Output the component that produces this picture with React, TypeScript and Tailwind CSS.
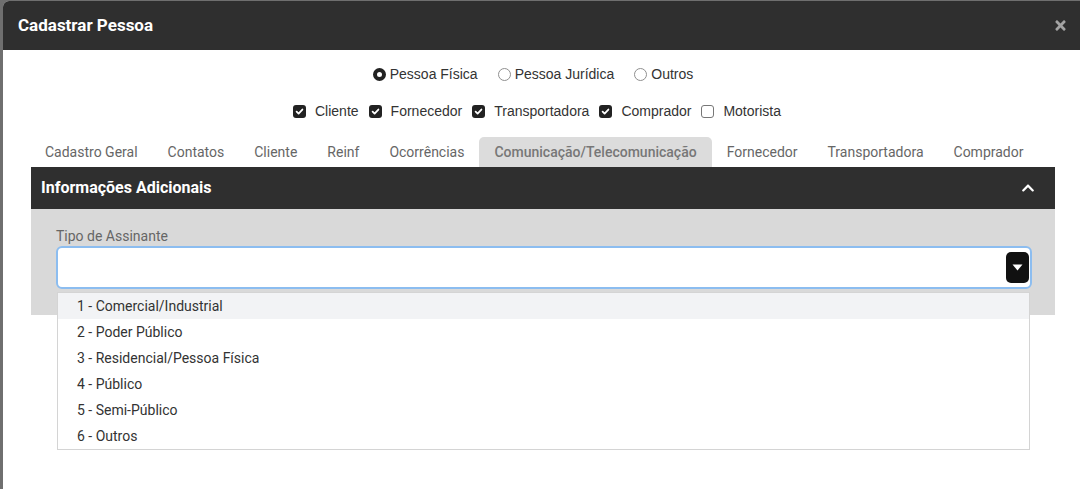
import React from 'react';
import { FaTimes, FaChevronUp } from 'react-icons/fa';

const tabs = [
  'Cadastro Geral',
  'Contatos',
  'Cliente',
  'Reinf',
  'Ocorrências',
  'Comunicação/Telecomunicação',
  'Fornecedor',
  'Transportadora',
  'Comprador',
];

const options = [
  '1 - Comercial/Industrial',
  '2 - Poder Público',
  '3 - Residencial/Pessoa Física',
  '4 - Público',
  '5 - Semi-Público',
  '6 - Outros',
];

const Radio = ({ checked, label }: { checked?: boolean; label: string }) => (
  <label className="flex items-center gap-[4px]">
    {checked ? (
      <span className="w-[13px] h-[13px] rounded-full border-[4px] border-[#222] bg-white" />
    ) : (
      <span className="w-[13px] h-[13px] rounded-full border border-[#8f8f8f] bg-white" />
    )}
    <span>{label}</span>
  </label>
);

const Check = ({ checked, label }: { checked?: boolean; label: string }) => (
  <label className="flex items-center gap-[9px]">
    {checked ? (
      <span className="w-[13px] h-[13px] rounded-[3px] bg-[#222] flex items-center justify-center">
        <svg width="9" height="9" viewBox="0 0 10 10">
          <path d="M1.8 5.2 L4 7.3 L8.2 2.8" fill="none" stroke="#fff" strokeWidth="2" strokeLinecap="round" strokeLinejoin="round" />
        </svg>
      </span>
    ) : (
      <span className="w-[13px] h-[13px] rounded-[3px] border border-[#777] bg-white" />
    )}
    <span>{label}</span>
  </label>
);

export default function App() {
  return (
    <div className="w-[1080px] h-[489px] bg-[#6f6f6f] overflow-hidden pl-[3px] pt-px">
      <div className="h-full bg-white rounded-tl-[6px] overflow-hidden" style={{ fontFamily: 'Roboto, sans-serif' }}>
        {/* Header */}
        <div className="h-[49px] bg-[#2f2f2f] flex items-center justify-between pl-[15px] pr-[12px]">
          <h2 className="text-white font-bold text-[17px]">Cadastrar Pessoa</h2>
          <FaTimes className="text-[#a3a3a3]" size={15} />
        </div>

        <div className="pl-[28px] pr-[25px]">
          {/* Pessoa type */}
          <div
            className="flex justify-center items-center gap-[20px] pt-[8px] h-[40px] text-[14px] text-[#333] -ml-[20px]"
            style={{ fontFamily: '"Liberation Sans", Arial, sans-serif' }}
          >
            <Radio checked label="Pessoa Física" />
            <Radio label="Pessoa Jurídica" />
            <Radio label="Outros" />
          </div>

          {/* Roles */}
          <div
            className="flex justify-center items-center gap-[10px] h-[26px] mt-[8px] text-[14px] text-[#333] -ml-[12px]"
            style={{ fontFamily: '"Liberation Sans", Arial, sans-serif' }}
          >
            <Check checked label="Cliente" />
            <Check checked label="Fornecedor" />
            <Check checked label="Transportadora" />
            <Check checked label="Comprador" />
            <Check label="Motorista" />
          </div>

          {/* Tabs */}
          <div className="flex mt-[13px] h-[30px] -ml-px">
            {tabs.map((t) => {
              const active = t === 'Comunicação/Telecomunicação';
              return (
                <div
                  key={t}
                  className={`px-[15px] flex items-center text-[14px] rounded-t-[5px] ${
                    active ? 'bg-[#dcdcdc] text-[#777] font-medium' : 'text-[#666]'
                  }`}
                >
                  {t}
                </div>
              );
            })}
          </div>

          {/* Panel */}
          <div className="relative">
            <div className="h-[42px] bg-[#2f2f2f] flex items-center justify-between pl-[10px] pr-[20px]">
              <span className="text-white font-bold text-[16px]">Informações Adicionais</span>
              <FaChevronUp className="text-white" size={14} />
            </div>
            <div className="bg-[#d9d9d9] h-[106px] pl-[25px] pr-[23px] pt-[18px]">
              <div className="text-[14px] text-[#666] leading-[18px] mb-[1px]">Tipo de Assinante</div>
              <div className="relative">
                <div className="h-[43px] bg-white border-2 border-[#8cbdf0] rounded-[6px] flex items-center justify-end pr-[1px]">
                  <div className="w-[23px] h-[31px] bg-[#111] rounded-[5px] flex items-center justify-center">
                    <svg width="11" height="7" viewBox="0 0 11 7">
                      <path d="M0.5 0.5 L10.5 0.5 L5.5 6.5 Z" fill="#fff" />
                    </svg>
                  </div>
                </div>
                <ul className="absolute left-px right-[2px] top-[46px] bg-white border border-[#d4d4d4] text-[14px] text-[#333] z-10">
                  {options.map((o, i) => (
                    <li
                      key={o}
                      className={`h-[26px] flex items-center pl-[19px] ${i === 0 ? 'bg-[#f2f3f5]' : ''}`}
                    >
                      {o}
                    </li>
                  ))}
                </ul>
              </div>
            </div>
          </div>
        </div>
      </div>
    </div>
  );
}
